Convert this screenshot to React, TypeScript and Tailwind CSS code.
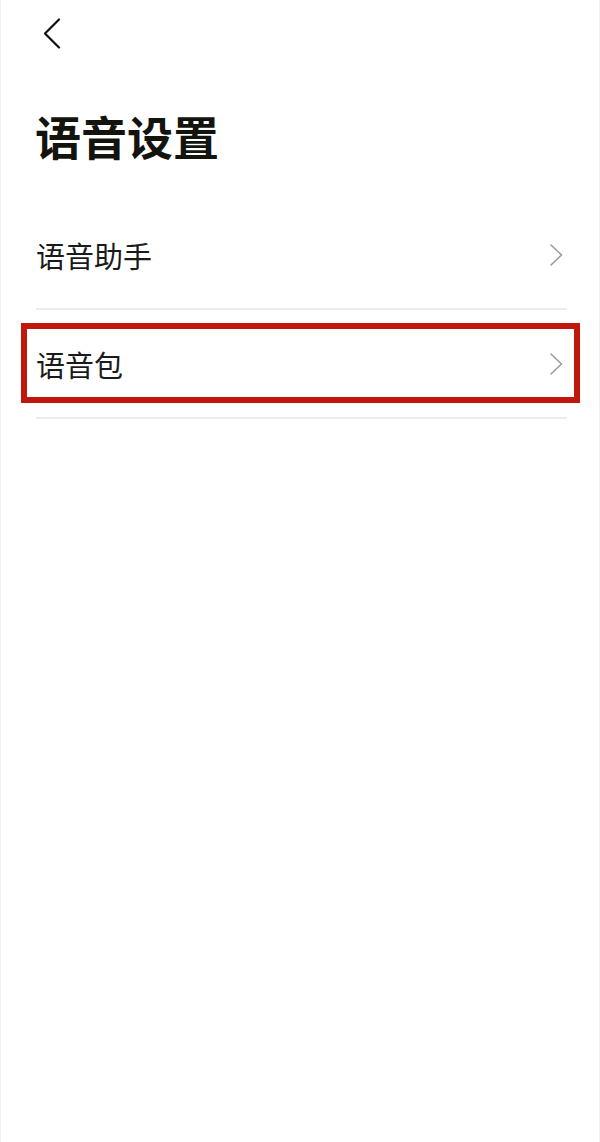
import React from 'react'

function Chevron() {
  return (
    <svg width="14" height="22" viewBox="0 0 14 22" fill="none" className="mr-[4px]">
      <path d="M2 1l10.5 10L2 21" stroke="#9b9b9b" strokeWidth="1.6" strokeLinecap="round" strokeLinejoin="round" />
    </svg>
  )
}

function Row({ label, highlight }: { label: string; highlight?: boolean }) {
  return (
    <div className="relative h-[109px] flex items-center justify-between border-b-2 border-[#ececec]">
      <span className="text-[29px] leading-[30px] text-[#1a1a1a]">{label}</span>
      <Chevron />
      {highlight && (
        <div className="absolute left-[-15px] right-[-13px] top-[13px] bottom-[14px] border-[6px] border-[#c1180e]" />
      )}
    </div>
  )
}

export default function App() {
  return (
    <div
      className="w-[600px] h-[1142px] bg-white border-x border-[#efefef] overflow-hidden"
      style={{ fontFamily: '"Noto Sans CJK SC", "Noto Sans", sans-serif' }}
    >
      <div className="h-[66px] pl-[41px] pt-[18px]">
        <svg width="20" height="31" viewBox="0 0 20 31" fill="none">
          <path d="M17 1.5L3 15.5l14 14" stroke="#111" strokeWidth="2.2" strokeLinecap="round" strokeLinejoin="round" />
        </svg>
      </div>
      <h1 className="mt-[46px] mb-[43px] pl-[34px] text-[46px] leading-[46px] font-bold text-[#14140f]">语音设置</h1>
      <div className="pl-[35px] pr-[32px]">
        <Row label="语音助手" />
        <Row label="语音包" highlight />
      </div>
    </div>
  )
}
